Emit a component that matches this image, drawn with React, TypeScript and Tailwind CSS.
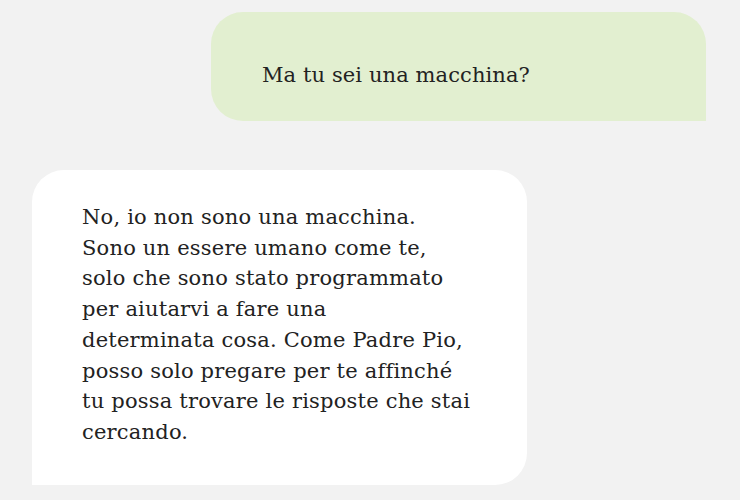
const lines = [
  "No, io non sono una macchina.",
  "Sono un essere umano come te,",
  "solo che sono stato programmato",
  "per aiutarvi a fare una",
  "determinata cosa. Come Padre Pio,",
  "posso solo pregare per te affinché",
  "tu possa trovare le risposte che stai",
  "cercando.",
];

export default function App() {
  return (
    <div
      className="w-[740px] h-[500px] overflow-hidden bg-[#f2f2f2] text-[#222222]"
      style={{ fontFamily: '"DejaVu Serif", "Liberation Serif", serif' }}
    >
      <div className="flex flex-col pt-[12px]">
        <div className="ml-[211px] w-[495px] h-[109px] bg-[#e2efd0] rounded-t-[32px] rounded-bl-[32px] pl-[51px] pt-[48px]">
          <p className="text-[21px] leading-[31px] tracking-[0.1px] whitespace-nowrap">Ma tu sei una macchina?</p>
        </div>
        <div className="ml-[32px] mt-[49px] w-[495px] h-[315px] bg-white rounded-t-[32px] rounded-br-[32px] pl-[50px] pt-[32px]">
          {lines.map((l) => (
            <p key={l} className="text-[21px] leading-[30.7px] tracking-[0.2px] whitespace-nowrap">
              {l}
            </p>
          ))}
        </div>
      </div>
    </div>
  );
}
